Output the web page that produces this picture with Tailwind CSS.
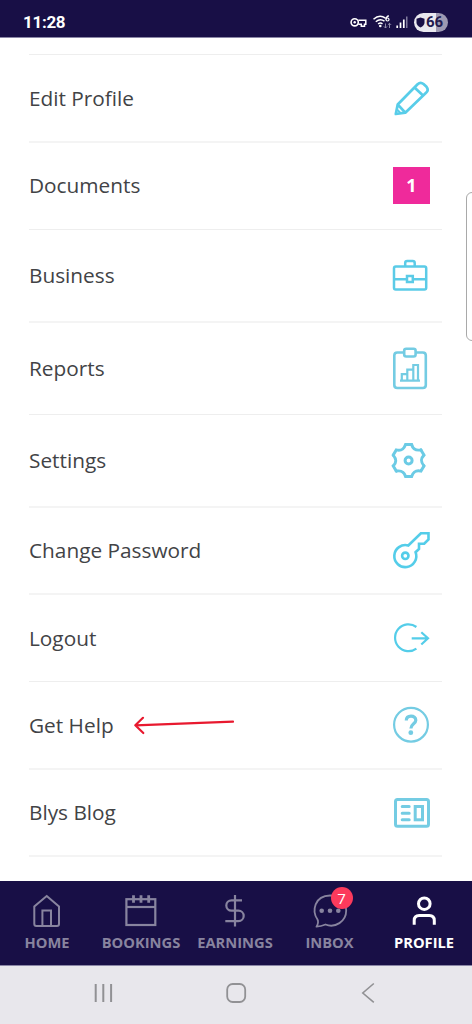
<!DOCTYPE html>
<html lang="en">
<head>
<meta charset="utf-8">
<meta name="viewport" content="width=device-width, initial-scale=1">
<title>Profile</title>
<script src="https://cdn.jsdelivr.net/npm/@tailwindcss/browser@4"></script>
</head>
<body class="bg-white font-['Open_Sans','Noto_Sans',sans-serif]">
<div class="relative flex h-[1024px] w-[472px] flex-col overflow-hidden bg-white">
  <!-- Status bar -->
  <header class="flex h-[38px] shrink-0 items-center justify-between border-b border-[#8a86a6] bg-[#180f46] pl-[23px] pr-[24.5px] pt-[7px] text-white">
    <span class="font-['Roboto',sans-serif] text-[17px] leading-5 font-bold tracking-[-0.3px]">11:28</span>
    <div class="flex items-center gap-[6px]">
      <svg class="h-5 w-[58px]" viewBox="349.500 12 58 20" fill="none" stroke="#fff">
        <circle cx="354.2" cy="22.3" r="3.6" stroke-width="1.6"/>
        <circle cx="354.2" cy="22.3" r="1.2" fill="#fff" stroke="none"/>
        <path d="M357.8 20.3H365.3V24.3H364V26.3H360.8V24.3H357.8" stroke-width="1.5"/>
        <path d="M373 19.3Q379 13.8 385 18.2M375.3 21.7Q379.5 18 384 21.2M377.6 24Q379.8 22.2 382 23.8" stroke-width="1.5"/>
        <circle cx="379.8" cy="26" r="1.3" fill="#fff" stroke="none"/>
        <path d="M388.3 15.6Q385.3 17 385.4 19.4" stroke-width="1.3"/><circle cx="387" cy="19.5" r="1.5" stroke-width="1.2"/>
        <path d="M385 23.5V28M383.4 26.4L385 28L386.6 26.4M389 28V23.3M387.4 24.9L389 23.3L390.6 24.9" stroke="#9b97b3" stroke-width=".9"/>
        <path d="M396.7 28V25.5M400 28V22.5M403.3 28V19.5" stroke-width="1.7"/>
        <path d="M406.3 28V16.5" stroke="#9b97b3" stroke-width="1.2"/>
      </svg>
      <div class="flex h-[19px] w-[34px] items-center gap-[1px] rounded-full bg-linear-to-r from-[#e9e8ef] from-66% to-[#9d99b2] to-66% pl-[2.5px] text-[#221a4f]">
        <svg class="h-[11px] w-[9px]" viewBox="0 0 9 12" preserveAspectRatio="none" fill="#180f46"><path d="M4.5 .5L8.5 2V6Q8.500 9.500 4.500 11.500Q.5 9.500 .5 6V2Z"/></svg>
        <span class="font-['Roboto',sans-serif] text-[15px] leading-5 font-bold">66</span>
      </div>
    </div>
  </header>

  <!-- Menu -->
  <main class="mx-[29px] mr-[30px] mt-4 flex h-[827px] shrink-0 flex-col border-t border-[#eeeeee] text-[20.8px] leading-7 text-[#424346]">
    <div class="flex h-[88px] items-center justify-between border-b-2 border-[#f4f4f4] pr-[8px]">
      <span>Edit Profile</span>
      <svg class="h-[46px] w-[46px]" viewBox="388 75 46 46" fill="none" stroke="#58cde9" stroke-width="2.7" stroke-linejoin="round"><path d="M395.8 114L397.7 104.500L417.600 84.200Q420.500 81.500 423.500 84L426.500 86.800Q429 90 426.300 92.500L405.300 112.700ZM397.700 104.500L405.300 112.700M414.500 87.500L423.300 95.800"/><path d="M397 109.500L400.500 113" stroke-width="2"/></svg>
    </div>
    <div class="flex h-[87px] items-center justify-between border-b border-[#eeeeee] pb-[2px] pr-[12px]">
      <span>Documents</span>
      <span class="flex h-[37px] w-[37px] items-center justify-center bg-[#ef2a9b] text-[18px] leading-none font-bold text-white">1</span>
    </div>
    <div class="flex h-[93px] items-center justify-between border-b-2 border-[#f4f4f4] pr-[8px]">
      <span class="pb-[1px]">Business</span>
      <svg class="h-[47px] w-[46px]" viewBox="388 252 46 47" fill="none" stroke="#5bcbe7" stroke-width="2.5"><rect x="394" y="266.500" width="32.200" height="23" rx="1.800"/><path d="M405.200 266V263Q405.200 261 407.200 261H412.700Q414.700 261 414.700 263V266M394 279.200H406.500M413.500 279.200H426"/><rect x="407" y="276" width="5.800" height="6"/></svg>
    </div>
    <div class="flex h-[92px] items-center justify-between border-b border-[#eeeeee] pr-[8px]">
      <span class="pb-[2px]">Reports</span>
      <svg class="h-[47px] w-[46px]" viewBox="388 345 46 47" fill="none" stroke="#74cce3" stroke-width="2.600"><path d="M404 352.500H397.300Q394.300 352.500 394.300 355.500V385Q394.300 388 397.300 388H422.800Q425.800 388 425.800 385V355.500Q425.800 352.500 422.800 352.500H416"/><rect x="404.200" y="348.700" width="11.400" height="7.800" rx="2"/><path d="M400 380.700H420M401.800 380V374.200H406.300M407.300 380V369.600H412.300M413.300 380V365H418V380" stroke-width="2.200"/></svg>
    </div>
    <div class="flex h-[93px] items-center justify-between border-b-2 border-[#f4f4f4] pr-[8px]">
      <span class="pb-[2px]">Settings</span>
      <svg class="h-[47px] w-[46px]" viewBox="388 437 46 47" fill="none" stroke="#6bcbe5" stroke-width="3" stroke-linecap="round">
        <g transform="translate(408.600 460.500)">
          <path id="tooth" d="M-3 -16H3C4.500 -10.800 7.500 -9.800 12.350 -10.600"/>
          <use href="#tooth" transform="rotate(60)"/><use href="#tooth" transform="rotate(120)"/><use href="#tooth" transform="rotate(180)"/><use href="#tooth" transform="rotate(240)"/><use href="#tooth" transform="rotate(300)"/>
          <circle r="3.500"/>
        </g>
      </svg>
    </div>
    <div class="flex h-[87px] items-center justify-between border-b-2 border-[#f4f4f4] pr-[8px]">
      <span class="pb-[2px]">Change Password</span>
      <svg class="h-[47px] w-[46px]" viewBox="388 527 46 47" fill="none" stroke="#54cde9" stroke-width="2.600"><path d="M408.300 545.500L420.900 533.200H428.500V539.400L424.200 543.700H419V549L415.600 552.200A11 11 0 1 1 408.300 545.500Z"/><circle cx="405.300" cy="555.800" r="3.200"/></svg>
    </div>
    <div class="flex h-[87px] items-center justify-between border-b border-[#eeeeee] pr-[8px]">
      <span class="pb-[1px]">Logout</span>
      <svg class="h-[46px] w-[46px]" viewBox="388 615 46 46" fill="none" stroke="#54cde9" stroke-width="2.200"><path d="M416.400 627A13.400 13.400 0 1 0 416.400 648.600M411.700 638.300H428M421.300 632.300L428 638.300L421.300 644.500"/></svg>
    </div>
    <div class="flex h-[88px] items-center justify-between border-b-2 border-[#f4f4f4] pr-[8px]">
      <div class="flex items-center">
        <span class="w-[103px] pb-[1px]">Get Help</span>
        <svg class="h-[22px] w-[104px]" viewBox="132 714 104 22" fill="none" stroke="#e8192f" stroke-width="2.200" stroke-linecap="round" stroke-linejoin="round"><path d="M135.300 725.300L233 721.700M143 717.800L135.300 725.300L143.300 733"/></svg>
      </div>
      <svg class="h-[46px] w-[46px]" viewBox="388 702 46 46" fill="none" stroke="#74cce3"><circle cx="411" cy="724.700" r="16.900" stroke-width="2.200"/><path d="M406.300 720.500C406.300 717.700 408.200 716.100 411 716.100C413.800 716.100 415.800 717.700 415.800 720.200C415.800 723.800 410.900 723.800 410.900 728.500" stroke-width="3.200"/><circle cx="410.800" cy="732.700" r="2.400" fill="#74cce3" stroke="none"/></svg>
    </div>
    <div class="flex h-[87px] items-center justify-between border-b-2 border-[#f4f4f4] pr-[8px]">
      <span class="pb-[2px]">Blys Blog</span>
      <svg class="h-[47px] w-[46px]" viewBox="388 789 46 47" fill="none" stroke="#74cce3" stroke-width="3"><rect x="395.500" y="799.500" width="33" height="26.700" rx="2"/><path d="M402.200 806.600H409.200M402.200 813.200H409.200M402.200 819.800H409.200" stroke-linecap="round"/><rect x="415.200" y="806.500" width="7.300" height="13.300"/></svg>
    </div>
  </main>

  <!-- Tab bar -->
  <nav class="grid h-[84px] shrink-0 grid-cols-5 bg-[#180f46] pr-[2px] pt-[9px] text-[14.7px] leading-5 font-bold text-[#88849f]">
    <div class="flex flex-col items-center gap-[3px]">
      <svg class="h-10 w-11" viewBox="25 890 44 40" fill="none" stroke="#88849f" stroke-width="2"><path d="M46.700 896L59 906.500V924Q59 926 57 926H36.300Q34.300 926 34.300 924V906.500ZM42.400 926V910.400H51V926"/></svg>
      <span class="-mt-px">HOME</span>
    </div>
    <div class="flex flex-col items-center gap-[3px]">
      <svg class="h-10 w-11" viewBox="119 890 44 40" fill="none" stroke="#88849f" stroke-width="2.200"><rect x="126.400" y="899.200" width="28.900" height="25.800"/><path d="M126.400 907H155.300"/><path d="M133.500 895.300V902.700M141 895.300V902.700M148.700 895.300V902.700" stroke-width="2.800"/></svg>
      <span class="-mt-px">BOOKINGS</span>
    </div>
    <div class="flex flex-col items-center gap-[3px]">
      <svg class="h-10 w-11" viewBox="213.500 890 44 40" fill="none" stroke="#88849f" stroke-width="2.200"><path d="M235.500 895V926.500M242.500 900.300H232A5.200 5.200 0 0 0 232 910.700H239A5.200 5.200 0 0 1 239 921.100H225.800"/></svg>
      <span class="-mt-px">EARNINGS</span>
    </div>
    <div class="relative flex flex-col items-center gap-[3px]">
      <svg class="h-10 w-11" viewBox="307 890 44 40" fill="none" stroke="#88849f" stroke-width="1.800"><path d="M316.500 926.700Q319 922.500 317.500 919.500C311.500 911 314.500 895.700 330 895.500C340 895.500 346.200 902.500 346.200 910.500C346.200 921.500 335 928.500 325.500 924.500Q321 926.500 316.500 926.700Z" stroke-linejoin="round"/><g fill="#88849f" stroke="none"><circle cx="321.700" cy="910.700" r="2.300"/><circle cx="330" cy="910.700" r="2.300"/><circle cx="338.300" cy="910.700" r="2.300"/></g></svg>
      <span class="-mt-px pl-px">INBOX</span>
      <span class="absolute -top-[3px] left-[48.5px] flex h-[22px] w-[22px] items-center justify-center rounded-full bg-[#fc3a5c] text-[15px] leading-none font-normal text-white">7</span>
    </div>
    <div class="flex flex-col items-center gap-[3px] text-white">
      <svg class="h-10 w-11" viewBox="401 890 44 40" fill="none" stroke="#fff" stroke-width="3"><circle cx="424.300" cy="903.700" r="5.800"/><path d="M414.200 924.700V920.500Q414.200 915.500 419.200 915.500H429.300Q434.300 915.500 434.300 920.500V924.700"/></svg>
      <span class="-mt-px pl-[2px]">PROFILE</span>
    </div>
  </nav>

  <!-- System navigation -->
  <footer class="flex h-[59px] shrink-0 items-start justify-between border-t border-[#8a86a6] bg-[#e8e7ec] pl-[93px] pr-[96px] pt-[15px]">
    <svg class="h-6 w-[22px]" viewBox="93.300 981 22 24" stroke="#919194" stroke-width="2"><path d="M96 984V1002M103.600 984V1002M111.400 984V1002"/></svg>
    <svg class="h-6 w-6" viewBox="225.500 981 24 24" fill="none" stroke="#919194" stroke-width="1.800"><rect x="226.700" y="984" width="18" height="18" rx="5.500"/></svg>
    <svg class="h-6 w-4" viewBox="360 981 16 24" fill="none" stroke="#919194" stroke-width="1.600"><path d="M373.800 983.500L362.800 993L373.800 1002.300"/></svg>
  </footer>

  <!-- Edge panel handle -->
  <div class="absolute top-[192px] left-[466px] h-[149px] w-3 rounded-[6px] border border-[#a9a9a9] bg-white"></div>
</div>
</body>
</html>
